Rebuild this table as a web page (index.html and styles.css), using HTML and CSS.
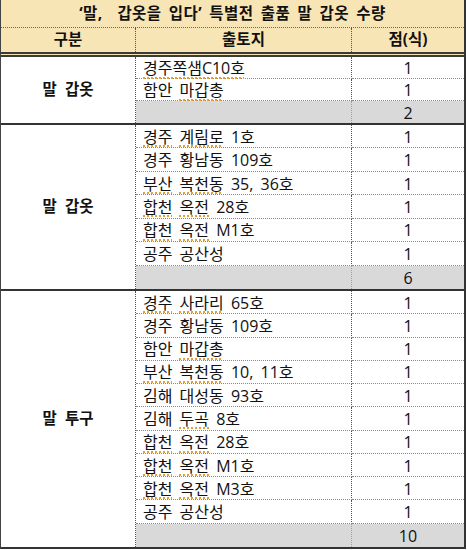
FILE: index.html
```html
<!DOCTYPE html>
<html lang="ko">
<head>
<meta charset="utf-8">
<title>말 갑옷 수량</title>
<link rel="stylesheet" href="styles.css">
</head>
<body>
<div class="sheet">
  <div class="title"><span>‘말,&nbsp; 갑옷을 입다’ 특별전 출품 말 갑옷 수량</span></div>
  <div class="head">
    <div class="hc c1">구분</div>
    <div class="hc c2">출토지</div>
    <div class="hc c3">점(식)</div>
  </div>

  <div class="group g3">
    <div class="label r3">말 갑옷</div>
    <div class="site"><span><span class="sp">경주쪽샘C10호</span></span></div><div class="num">1</div>
    <div class="site"><span>함안 <span class="sp">마갑총</span></span></div><div class="num">1</div>
    <div class="site sub"></div><div class="num sub">2</div>
  </div>

  <div class="group g7">
    <div class="label r7">말 갑옷</div>
    <div class="site"><span><span class="sp">경주</span> <span class="sp">계림로</span> 1호</span></div><div class="num">1</div>
    <div class="site"><span>경주 황남동 109호</span></div><div class="num">1</div>
    <div class="site"><span><span class="sp">부산</span> <span class="sp">복천동</span> 35, 36호</span></div><div class="num">1</div>
    <div class="site"><span><span class="sp">합천</span> <span class="sp">옥전</span> 28호</span></div><div class="num">1</div>
    <div class="site"><span><span class="sp">합천</span> <span class="sp">옥전</span> M1호</span></div><div class="num">1</div>
    <div class="site"><span>공주 공산성</span></div><div class="num">1</div>
    <div class="site sub"></div><div class="num sub">6</div>
  </div>

  <div class="group g11 last">
    <div class="label r11">말 투구</div>
    <div class="site"><span><span class="sp">경주</span> <span class="sp">사라리</span> 65호</span></div><div class="num">1</div>
    <div class="site"><span>경주 황남동 109호</span></div><div class="num">1</div>
    <div class="site"><span>함안 <span class="sp">마갑총</span></span></div><div class="num">1</div>
    <div class="site"><span><span class="sp">부산</span> <span class="sp">복천동</span> 10, 11호</span></div><div class="num">1</div>
    <div class="site"><span>김해 대성동 93호</span></div><div class="num">1</div>
    <div class="site"><span>김해 <span class="sp">두곡</span> 8호</span></div><div class="num">1</div>
    <div class="site"><span><span class="sp">합천</span> <span class="sp">옥전</span> 28호</span></div><div class="num">1</div>
    <div class="site"><span><span class="sp">합천</span> <span class="sp">옥전</span> M1호</span></div><div class="num">1</div>
    <div class="site"><span><span class="sp">합천</span> <span class="sp">옥전</span> M3호</span></div><div class="num">1</div>
    <div class="site"><span>공주 공산성</span></div><div class="num">1</div>
    <div class="site sub"></div><div class="num sub">10</div>
  </div>
</div>
</body>
</html>
```

FILE: styles.css
```css
* { box-sizing: border-box; }
html, body { margin: 0; padding: 0; background: #ffffff; }
body {
  font-family: "Open Sans", "Noto Sans CJK KR", sans-serif;
  color: #111111;
  font-size: 16px;
}
.sheet {
  width: 466px;
  border-right: 2px solid #333;
  border-left: 1px solid #444;
}
.title {
  height: 28px;
  background: #f8e5b6;
  border-bottom: 1px dotted #666;
  display: flex;
  align-items: center;
  justify-content: center;
  font-weight: bold;
  font-size: 15.5px;
  word-spacing: 3px;
  letter-spacing: 0.4px;
  line-height: 1;
}
.head {
  height: 29px;
  display: grid;
  grid-template-columns: 135px 216px 1fr;
  background: #f8e5b6;
  border-bottom: 5px double #3a3a3a;
}
.hc {
  display: flex;
  align-items: center;
  justify-content: center;
  font-weight: bold;
  font-size: 15.5px;
  line-height: 1;
  padding-bottom: 1px;
}
.hc.c1, .hc.c2 { border-right: 1px dotted #555; }
.group {
  display: grid;
  grid-template-columns: 135px 216px 1fr;
  border-bottom: 2px solid #333;
}
.g3 { height: 68px; grid-template-rows: repeat(3, 1fr); }
.g7 { height: 166px; grid-template-rows: repeat(7, 1fr); }
.g11 { height: 258px; grid-template-rows: repeat(11, 1fr); }
.label {
  grid-column: 1;
  display: flex;
  align-items: center;
  justify-content: center;
  font-weight: bold;
  font-size: 15.5px;
  word-spacing: 4px;
  border-right: 1px dotted #555;
  line-height: 1;
}
.r3 { grid-row: 1 / span 3; }
.r7 { grid-row: 1 / span 7; }
.r11 { grid-row: 1 / span 11; }
.site, .num {
  display: flex;
  align-items: center;
  line-height: 1;
  border-bottom: 1px dotted #8a8a8a;
  padding-top: 1px;
}
.site {
  grid-column: 2;
  padding-left: 7px;
  border-right: 1px dotted #555;
  word-spacing: 3px;
}
.num {
  grid-column: 3;
  justify-content: center;
}
.sub {
  background: #d9d9d9;
  border-bottom: none;
}
.site.sub { border-right: 1px dotted #a0a0a0; }
.sp {
  text-decoration: underline dotted #e2a03c;
  text-decoration-thickness: 1.5px;
  text-underline-offset: 3px;
}
```
